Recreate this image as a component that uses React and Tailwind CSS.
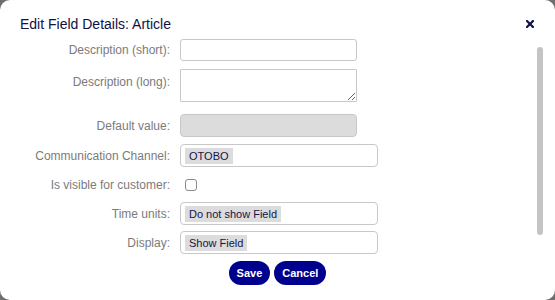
import React from "react";

const font = { fontFamily: '"Liberation Sans", Arial, sans-serif' };

function Label({ children, className = "" }) {
  return (
    <div className={"w-[170px] shrink-0 text-right text-[12px] leading-[14px] text-[#7b7b7b] " + className}>
      {children}
    </div>
  );
}

function Token({ children }) {
  return (
    <span className="inline-block bg-[#dcdcdc] px-[4px] text-[11px] leading-[16px] text-[#14144a]">{children}</span>
  );
}

export default function App() {
  return (
    <div className="w-[555px] h-[300px] bg-[#6e6e6e]" style={font}>
      <div className="relative w-full h-full bg-white rounded-[10px] flex flex-col">
        <div className="h-[39px] flex items-start pl-[20px] pt-[16px] pr-[21px]">
          <div className="text-[14px] leading-[16px] text-[#101045]">Edit Field Details: Article</div>
          <svg className="ml-auto mt-[4px]" width="8" height="8" viewBox="0 0 8 8">
            <path d="M1 1 L7 7 M7 1 L1 7" stroke="#101045" strokeWidth="2.2" strokeLinecap="square" />
          </svg>
        </div>

        <div className="flex flex-col">
          <div className="flex items-center gap-[10px] h-[22px]">
            <Label>Description (short):</Label>
            <div className="w-[177px] h-[22px] border border-[#c8c8c8] rounded-[3px] bg-white" />
          </div>

          <div className="flex items-start gap-[10px] mt-[8px] h-[33px]">
            <Label className="pt-[6px]">Description (long):</Label>
            <textarea className="w-[177px] h-[33px] border border-[#c8c8c8] rounded-[1px] bg-white outline-none" />
          </div>

          <div className="flex items-center gap-[10px] mt-[12px] h-[23px]">
            <Label>Default value:</Label>
            <div className="w-[177px] h-[23px] border border-[#c8c8c8] rounded-[4px] bg-[#dcdcdc]" />
          </div>

          <div className="flex items-center gap-[10px] mt-[7px] h-[23px]">
            <Label>Communication Channel:</Label>
            <div className="w-[198px] h-[23px] border border-[#c8c8c8] rounded-[4px] bg-white flex items-center pl-[4px]">
              <Token>OTOBO</Token>
            </div>
          </div>

          <div className="flex items-center gap-[10px] mt-[6px] h-[23px]">
            <Label>Is visible for customer:</Label>
            <div className="ml-[5px] w-[12px] h-[12px] border border-[#8a8a8a] rounded-[3px] bg-white" />
          </div>

          <div className="flex items-center gap-[10px] mt-[6px] h-[23px]">
            <Label>Time units:</Label>
            <div className="w-[198px] h-[23px] border border-[#c8c8c8] rounded-[4px] bg-white flex items-center pl-[4px]">
              <Token>Do not show Field</Token>
            </div>
          </div>

          <div className="flex items-center gap-[10px] mt-[6px] h-[23px]">
            <Label>Display:</Label>
            <div className="w-[198px] h-[23px] border border-[#c8c8c8] rounded-[4px] bg-white flex items-center pl-[4px]">
              <Token>Show Field</Token>
            </div>
          </div>

          <div className="flex justify-center gap-[4px] mt-[7px]">
            <button className="h-[24px] px-[8px] rounded-full bg-[#00008f] text-white text-[11px] font-bold">Save</button>
            <button className="h-[24px] px-[8px] rounded-full bg-[#00008f] text-white text-[11px] font-bold">Cancel</button>
          </div>
        </div>

        <div className="absolute left-[537px] top-[47px] w-[6px] h-[188px] rounded-full bg-[#c4c4c4]" />
      </div>
    </div>
  );
}
